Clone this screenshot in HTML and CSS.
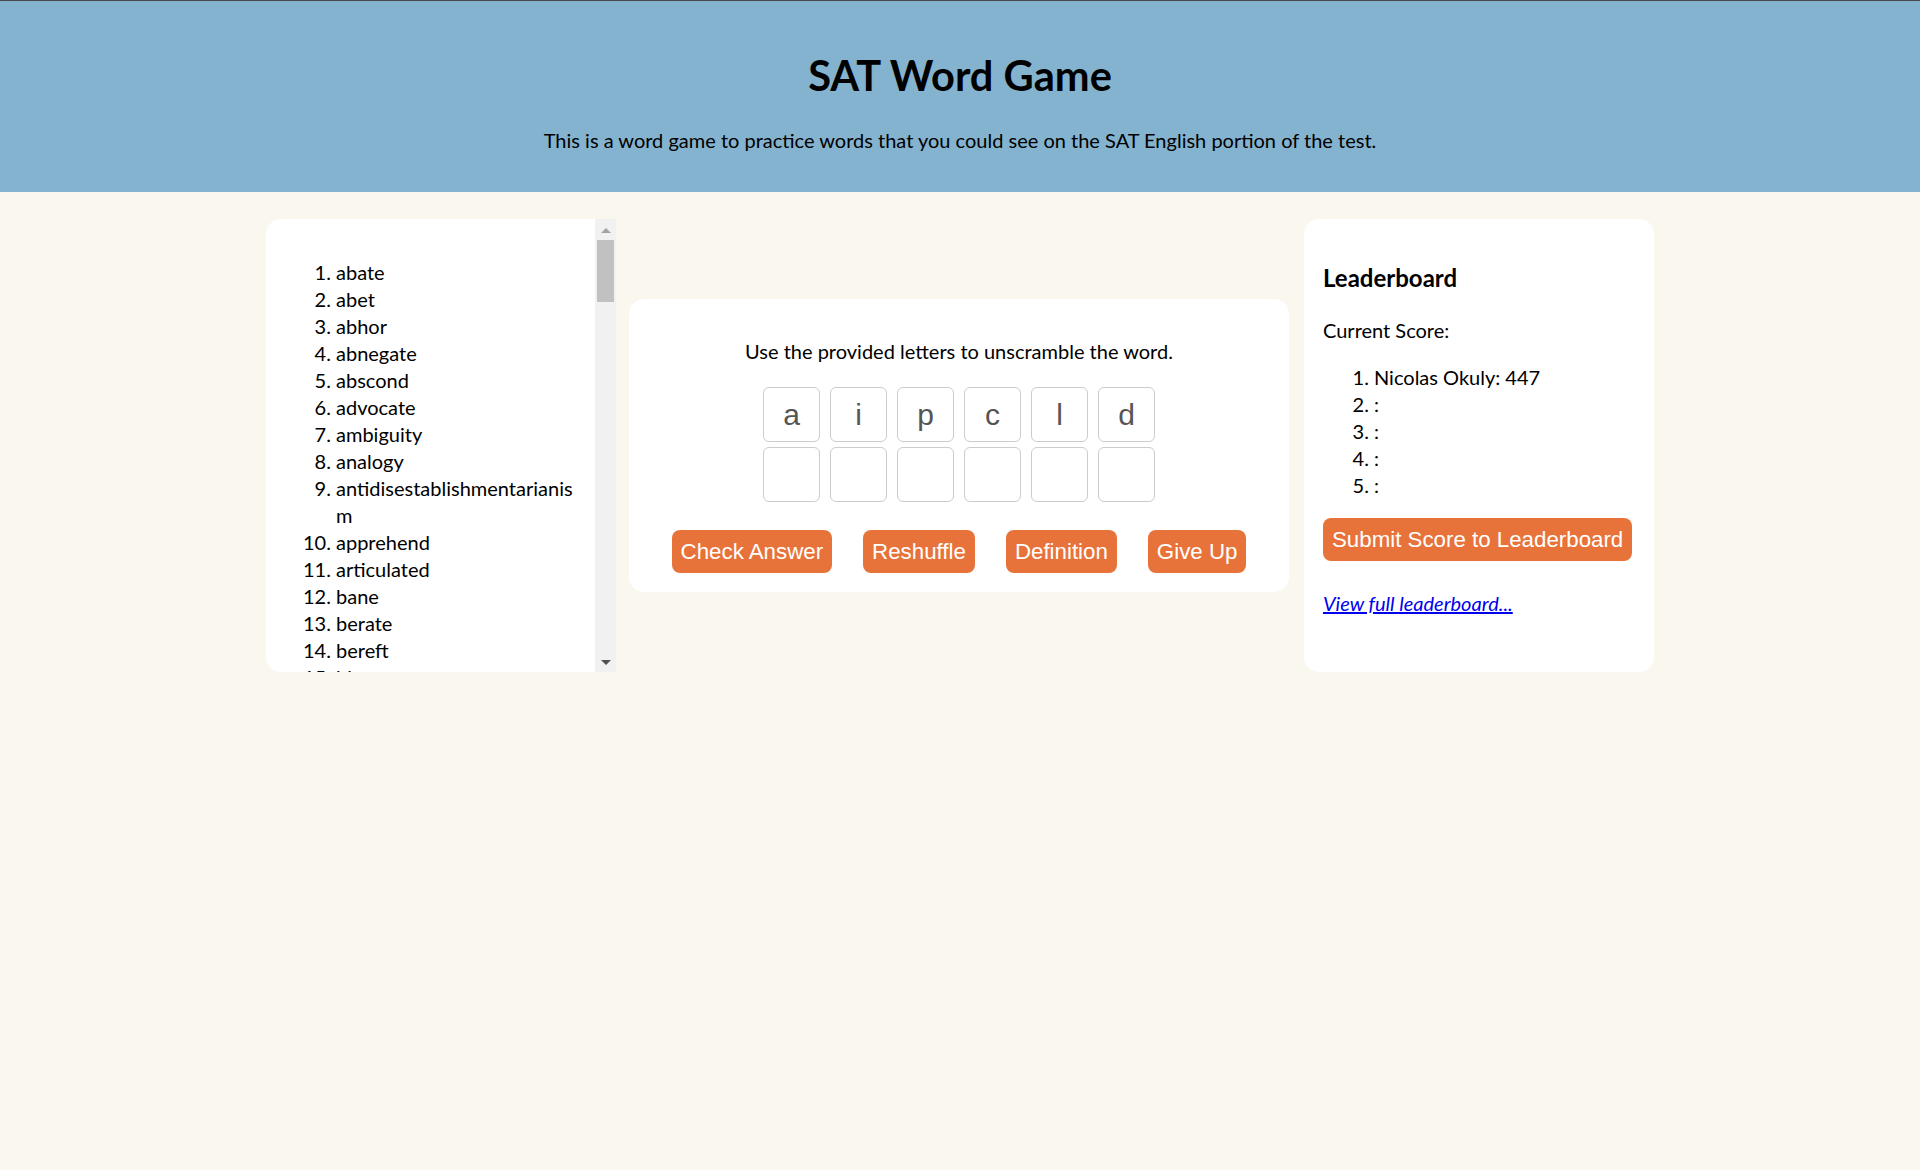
FILE: index.html
```html
<!DOCTYPE html>
<html lang="en">
<head>
<meta charset="utf-8">
<title>SAT Word Game</title>
<link rel="stylesheet" href="styles.css">
</head>
<body>
<header class="site-header">
  <h1 class="site-title">SAT Word Game</h1>
  <p class="site-sub">This is a word game to practice words that you could see on the SAT English portion of the test.</p>
</header>
<main class="main">
  <section class="card words">
    <div class="words-body">
      <ol class="word-list">
        <li>abate</li><li>abet</li><li>abhor</li><li>abnegate</li><li>abscond</li><li>advocate</li><li>ambiguity</li><li>analogy</li><li>antidisestablishmentarianism</li><li>apprehend</li>
        <li>articulated</li><li>bane</li><li>berate</li><li>bereft</li><li>blatant</li><li>bolster</li>
      </ol>
    </div>
    <div class="scrollbar" aria-hidden="true">
      <div class="sb-btn"><span class="sb-arrow sb-up"></span></div>
      <div class="sb-track"><div class="sb-thumb"></div></div>
      <div class="sb-btn"><span class="sb-arrow sb-down"></span></div>
    </div>
  </section>

  <section class="card game">
    <p class="instr">Use the provided letters to unscramble the word.</p>
    <div class="tiles">
      <div class="tile">a</div><div class="tile">i</div><div class="tile">p</div><div class="tile">c</div><div class="tile">l</div><div class="tile">d</div>
      <div class="tile"></div><div class="tile"></div><div class="tile"></div><div class="tile"></div><div class="tile"></div><div class="tile"></div>
    </div>
    <div class="actions">
      <button class="btn" type="button">Check Answer</button>
      <button class="btn" type="button">Reshuffle</button>
      <button class="btn" type="button">Definition</button>
      <button class="btn" type="button">Give Up</button>
    </div>
  </section>

  <section class="card board">
    <h3 class="board-title">Leaderboard</h3>
    <p class="score">Current Score:</p>
    <ol class="board-list">
      <li>Nicolas Okuly: 447</li>
      <li>: </li>
      <li>: </li>
      <li>: </li>
      <li>: </li>
    </ol>
    <button class="btn btn-submit" type="button">Submit Score to Leaderboard</button>
    <p class="full-link"><a href="#">View full leaderboard...</a></p>
  </section>
</main>
</body>
</html>
```

FILE: styles.css
```css
html, body {
  margin: 0;
  padding: 0;
}

body {
  background: #faf7ef;
  font-family: Lato, "Open Sans", sans-serif;
  font-size: 20px;
  line-height: 27px;
  color: #000;
}

.site-header {
  background: #84b3cf;
  border-top: 1px solid #4a4a4a;
  padding: 48px 0 38px;
  text-align: center;
}

.site-title {
  margin: 0;
  font-size: 41.6px;
  line-height: 53px;
  font-weight: 700;
}

.site-sub {
  margin: 25px 0 0;
}

.main {
  display: flex;
  justify-content: center;
  align-items: center;
  padding-top: 27px;
}

.card {
  background: #fff;
  border-radius: 15px;
  box-sizing: border-box;
}

/* word list card with its scrollbar */
.words {
  width: 350px;
  height: 453px;
  display: flex;
  overflow: hidden;
  border-radius: 15px 0 0 15px;
}

.words-body {
  flex: 1;
  min-width: 0;
  padding: 20px;
  overflow: hidden;
}

.word-list {
  margin: 20px 0;
  padding-left: 50px;
  overflow-wrap: anywhere;
}

.scrollbar {
  width: 21px;
  flex: none;
  display: flex;
  flex-direction: column;
  background: #f1f1f1;
}

.sb-btn {
  height: 21px;
  flex: none;
  display: flex;
  align-items: center;
  justify-content: center;
}

.sb-arrow {
  width: 0;
  height: 0;
  border-left: 5px solid transparent;
  border-right: 5px solid transparent;
}

.sb-up {
  border-bottom: 5px solid #a3a3a3;
  margin-top: 2px;
}

.sb-down {
  border-top: 5px solid #505050;
  margin-top: 1px;
}

.sb-track {
  flex: 1;
}

.sb-thumb {
  height: 62px;
  margin: 0 2px;
  background: #c1c1c1;
}

/* game card */
.game {
  width: 660px;
  margin: 0 15px 0 13px;
  padding: 19px 20px 19px;
  text-align: center;
}

.instr {
  margin: 20px 0 22px;
}

.tiles {
  display: grid;
  grid-template-columns: repeat(6, 57px);
  gap: 5px 10px;
  justify-content: center;
}

.tile {
  height: 55px;
  box-sizing: border-box;
  border: 1px solid #cccccc;
  border-radius: 6px;
  font-family: "Liberation Sans", Arial, sans-serif;
  font-size: 30px;
  line-height: 53px;
  color: #555;
}

.actions {
  display: flex;
  justify-content: center;
  gap: 31px;
  margin-top: 28px;
}

.btn {
  font-family: "Liberation Sans", Arial, sans-serif;
  font-size: 22.3px;
  line-height: 43px;
  height: 43px;
  padding: 0 9px;
  color: #fff;
  background: #e8733a;
  border: none;
  border-radius: 8px;
  cursor: pointer;
}

/* leaderboard card */
.board {
  width: 350px;
  height: 453px;
  padding: 20px 20px 20px 19px;
}

.board-title {
  font-size: 24px;
  line-height: 31px;
  margin: 23.4px 0;
}

.score {
  margin: 20px 0;
}

.board-list {
  margin: 20px 0 19px;
  padding-left: 51px;
}

.btn-submit {
  display: block;
}

.full-link {
  margin: 29px 0 0;
}

.full-link a {
  color: #0000ee;
  font-style: italic;
}
```
